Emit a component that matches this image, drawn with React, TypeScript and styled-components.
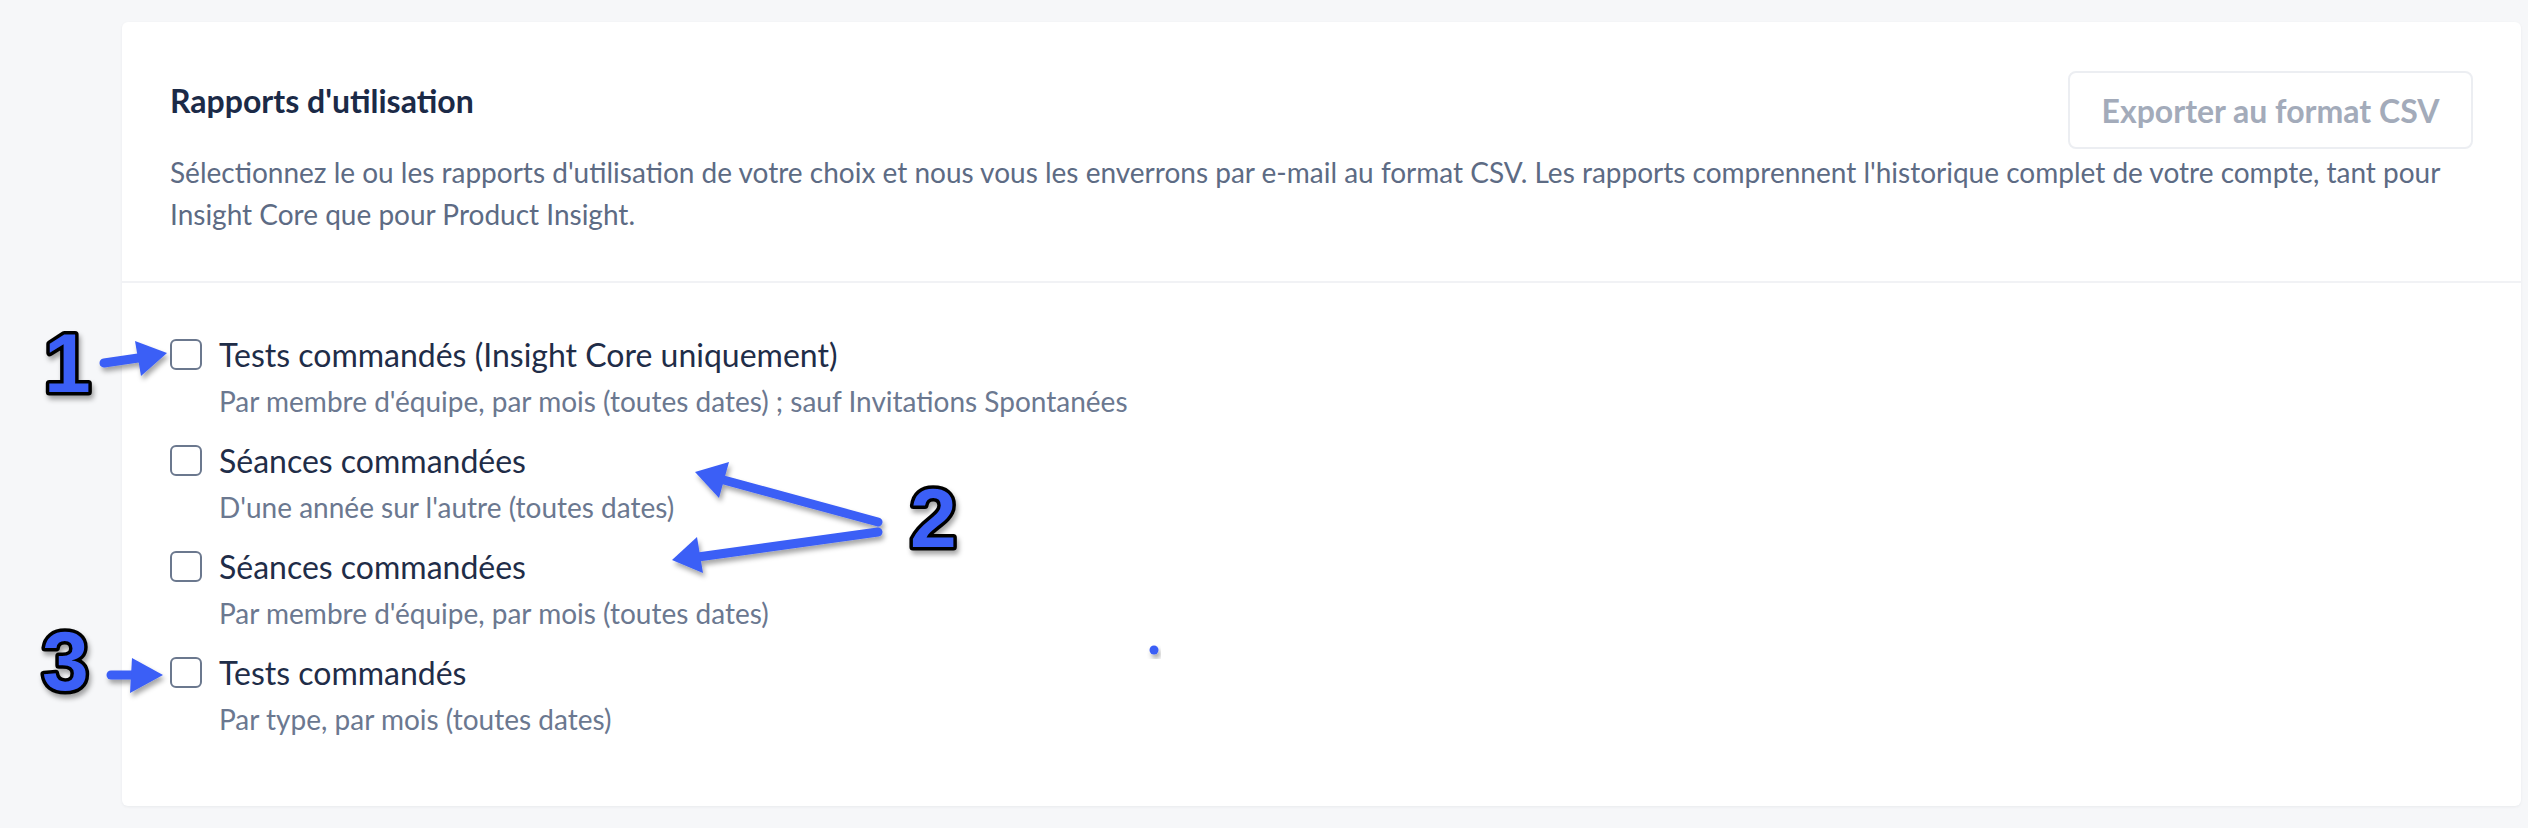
import React from "react";
import styled, { createGlobalStyle } from "styled-components";

const GlobalStyle = createGlobalStyle`
  html, body { margin: 0; padding: 0; background: #f6f7f9; }
  body { font-family: Lato, "Open Sans", sans-serif; -webkit-font-smoothing: antialiased; }
`;

const Page = styled.div`
  position: relative;
  width: 2528px;
  height: 828px;
  box-sizing: border-box;
  padding: 22px 7px 22px 122px;
  overflow: hidden;
`;

const Card = styled.section`
  background: #ffffff;
  border-radius: 6px;
  box-shadow: 0 1px 3px rgba(20, 30, 50, 0.06);
  height: 100%;
  display: flex;
  flex-direction: column;
`;

const Header = styled.header`
  padding: 49px 48px 46px 48px;
  border-bottom: 2px solid #f1f2f5;
`;

const HeaderRow = styled.div`
  display: flex;
  justify-content: space-between;
  align-items: flex-start;
`;

const Title = styled.h2`
  margin: 10px 0 0 0;
  font-size: 32px;
  line-height: 40px;
  font-weight: 700;
  color: #1b2a47;
`;

const ExportButton = styled.button`
  height: 78px;
  width: 405px;
  box-sizing: border-box;
  border: 2px solid #eceef2;
  border-radius: 8px;
  background: #ffffff;
  color: #a3abba;
  font-family: inherit;
  font-size: 32px;
  font-weight: 700;
  cursor: not-allowed;
`;

const Description = styled.p`
  margin: 2px 0 0 0;
  font-size: 28px;
  line-height: 42px;
  color: #5d6b84;
`;

const Body = styled.div`
  padding: 52px 48px 0 48px;
  display: flex;
  flex-direction: column;
  gap: 20px;
`;

const Item = styled.label`
  display: grid;
  grid-template-columns: 32px 1fr;
  column-gap: 17px;
  row-gap: 6px;
  cursor: pointer;
`;

const Box = styled.input.attrs({ type: "checkbox" })`
  appearance: none;
  margin: 4px 0 0 0;
  width: 32px;
  height: 31px;
  box-sizing: border-box;
  border: 2px solid #6b788e;
  border-radius: 6px;
  background: #fff;
`;

const Label = styled.span`
  font-size: 32px;
  line-height: 40px;
  color: #1f2d48;
`;

const Sub = styled.span`
  grid-column: 2;
  font-size: 28px;
  line-height: 40px;
  color: #6b7890;
`;

const Overlay = styled.svg`
  position: absolute;
  left: 0;
  top: 0;
  pointer-events: none;
`;

const BLUE = "#3b5ef6";

const Arrow = ({ x1, y1, x2, y2, head }: { x1: number; y1: number; x2: number; y2: number; head: string }) => (
  <g filter="url(#shadow)">
    <line x1={x1} y1={y1} x2={x2} y2={y2} stroke={BLUE} strokeWidth={9} strokeLinecap="round" />
    <polygon points={head} fill={BLUE} />
  </g>
);

const Num = ({ x, y, children }: { x: number; y: number; children: string }) => (
  <text
    x={x}
    y={y}
    fontFamily="'Liberation Sans', Arial, sans-serif"
    fontWeight={700}
    fontSize={84}
    fill={BLUE}
    stroke="#000"
    strokeWidth={7}
    strokeLinejoin="round"
    paintOrder="stroke"
    filter="url(#shadow)"
  >
    {children}
  </text>
);

const items = [
  { label: "Tests commandés (Insight Core uniquement)", sub: "Par membre d'équipe, par mois (toutes dates) ; sauf Invitations Spontanées" },
  { label: "Séances commandées", sub: "D'une année sur l'autre (toutes dates)" },
  { label: "Séances commandées", sub: "Par membre d'équipe, par mois (toutes dates)" },
  { label: "Tests commandés", sub: "Par type, par mois (toutes dates)" },
];

export default function App() {
  return (
    <>
      <GlobalStyle />
      <Page>
        <Card>
          <Header>
            <HeaderRow>
              <Title>Rapports d'utilisation</Title>
              <ExportButton disabled>Exporter au format CSV</ExportButton>
            </HeaderRow>
            <Description>
              Sélectionnez le ou les rapports d'utilisation de votre choix et nous vous les enverrons par e-mail au format
              CSV. Les rapports comprennent l'historique complet de votre compte, tant pour Insight Core que pour Product
              Insight.
            </Description>
          </Header>
          <Body>
            {items.map((it, i) => (
              <Item key={i}>
                <Box />
                <Label>{it.label}</Label>
                <Sub>{it.sub}</Sub>
              </Item>
            ))}
          </Body>
        </Card>
        <Overlay width={2528} height={828} viewBox="0 0 2528 828">
          <defs>
            <filter id="shadow" x="-20%" y="-20%" width="140%" height="160%">
              <feDropShadow dx="2" dy="4" stdDeviation="2.5" floodColor="#000" floodOpacity="0.35" />
            </filter>
          </defs>
          <Num x={44} y={392}>1</Num>
          <Arrow x1={104} y1={363} x2={145} y2={357} head="167,353 135,341 141,376" />
          <Num x={910} y={547}>2</Num>
          <Arrow x1={878} y1={522} x2={720} y2={479} head="695,472 729,462 719,498" />
          <Arrow x1={878} y1={532} x2={698} y2={557} head="672,560 697,537 703,573" />
          <Num x={42} y={690}>3</Num>
          <Arrow x1={111} y1={675} x2={140} y2={675} head="163,675 132,658 130,693" />
          <circle cx={1154} cy={650} r={4.5} fill={BLUE} filter="url(#shadow)" />
        </Overlay>
      </Page>
    </>
  );
}
